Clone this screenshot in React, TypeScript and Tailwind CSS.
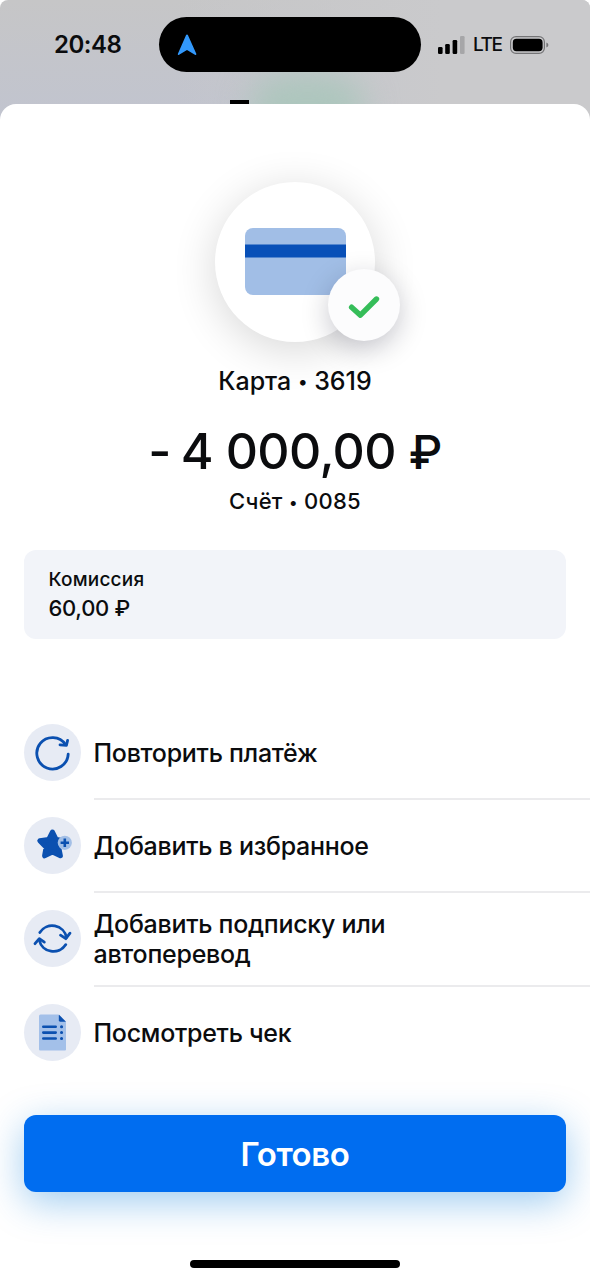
import type { ReactNode } from "react";

interface Action {
  label: string;
  icon: ReactNode;
}

function RepeatIcon() {
  return (
    <svg viewBox="0 0 57 57" className="h-full w-full" fill="none" stroke="#0b50b0" strokeWidth="2.8" strokeLinecap="round" strokeLinejoin="round">
      <path d="M44.2 30.2A15.7 15.7 0 1 1 41.6 20.6" />
      <path d="M36 20.8L42.4 21.4L43.6 16.4" />
    </svg>
  );
}

function FavoriteIcon() {
  return (
    <svg viewBox="0 0 57 57" className="h-full w-full">
      <path
        d="M28.5 15L32.2 22.6L40.8 23.8L34.7 30.2L36.4 38.8L28.5 34.9L20.6 38.8L22.1 30.2L15.8 23.8L24.6 22.6Z"
        fill="#0b50b0"
        stroke="#0b50b0"
        strokeWidth="5"
        strokeLinejoin="round"
      />
      <circle cx="40.8" cy="25.8" r="7.1" fill="#a3bfe6" />
      <path d="M36.6 25.8H45M40.8 21.6V30" stroke="#0b50b0" strokeWidth="2.6" />
    </svg>
  );
}

function SubscriptionIcon() {
  return (
    <svg viewBox="0 0 57 57" className="h-full w-full" fill="none" stroke="#0b50b0" strokeWidth="2.8" strokeLinecap="round" strokeLinejoin="round">
      <path d="M15.8 22.6A14.6 14.6 0 0 1 42.5 27.5" />
      <path d="M36.5 25.2L41.8 28.7L46 23.2" />
      <path d="M41.8 34.6A14.6 14.6 0 0 1 15.2 30" />
      <path d="M11 33.7L15.3 28.6L20.3 32.1" />
    </svg>
  );
}

function ReceiptIcon() {
  return (
    <svg viewBox="0 0 57 57" className="h-full w-full">
      <path d="M16.5 10.5H34L42 18V45.5Q42 46.5 41 46.5H16.2Q15 46.5 15 45.3V12Q15 10.5 16.5 10.5Z" fill="#a3c0e9" />
      <path d="M34.8 10.5L42 17.7H36.2Q34.8 17.7 34.8 16.3Z" fill="#0b50b0" />
      <path d="M19.3 22.8H31.7M19.3 28.6H31.7M19.3 34.5H31.7" stroke="#0b50b0" strokeWidth="2.6" strokeLinecap="round" />
      <path d="M37.5 22.8H37.6M37.5 28.6H37.6M37.5 34.5H37.6" stroke="#0b50b0" strokeWidth="3" strokeLinecap="round" />
    </svg>
  );
}

const actions: Action[] = [
  { label: "Повторить платёж", icon: <RepeatIcon /> },
  { label: "Добавить в избранное", icon: <FavoriteIcon /> },
  { label: "Добавить подписку или автоперевод", icon: <SubscriptionIcon /> },
  { label: "Посмотреть чек", icon: <ReceiptIcon /> },
];

function StatusBar() {
  return (
    <div className="relative flex h-[120px] w-full items-start overflow-hidden rounded-t-lg bg-linear-to-b from-[#c6c6c7] to-[#c1c4cf]">
      <div className="absolute inset-0 bg-linear-to-r from-transparent from-30% to-[#cacacc] to-75%" />
      <div className="absolute top-[74px] left-[250px] h-[70px] w-[115px] rounded-full bg-[#adc6bd] blur-lg" />
      <div className="absolute top-[100px] left-[230px] h-[6px] w-[19px] bg-black" />
      <div className="relative flex w-full items-center pt-[17px]">
        <span className="ml-[54px] w-[105px] text-[24px] leading-[55px] font-semibold tracking-[-0.5px]">20:48</span>
        <div className="flex h-[55px] w-[262px] items-center rounded-full bg-black pl-[18px]">
          <svg viewBox="0 0 20 22" className="h-[22px] w-5">
            <path d="M10 .4Q10.7.4 11 1.2L19.3 19.8Q19.5 21.5 17.9 20.8L10 15.9L2.1 20.8Q.5 21.5.9 19.8L9 1.2Q9.3.4 10 .4Z" fill="#3298fb" />
          </svg>
        </div>
        <svg viewBox="0 0 28 18" className="ml-[17px] h-[18px] w-7">
          <rect x="0" y="11" width="4.6" height="7" rx="1.3" />
          <rect x="7.2" y="8" width="4.6" height="10" rx="1.3" />
          <rect x="14.6" y="4" width="4.6" height="14" rx="1.3" />
          <rect x="22" y="0" width="4.6" height="18" rx="1.3" fill="#a6a6a8" />
        </svg>
        <span className="ml-[7px] w-[37px] text-[19px] leading-[55px] font-medium tracking-[-1.4px]">LTE</span>
        <svg viewBox="0 0 39 18" className="h-[18px] w-[39px]">
          <rect x=".6" y=".6" width="33.8" height="16.8" rx="5.4" fill="none" stroke="#747476" strokeWidth="1.2" />
          <rect x="2.8" y="2.8" width="29.8" height="12.4" rx="3.6" />
          <path d="M36.4 6.4Q38.4 7.2 38.4 9T36.4 11.6Z" fill="#747476" />
        </svg>
      </div>
    </div>
  );
}

function PaymentBadge() {
  return (
    <div className="relative mt-[78px] h-[160px] w-[160px] rounded-full bg-white shadow-[0_8px_44px_rgba(0,0,0,0.16)]">
      <svg viewBox="0 0 101 67" className="mt-[46px] ml-[30px] h-[67px] w-[101px]">
        <rect width="101" height="67" rx="8" fill="#a1bee6" />
        <path d="M0 16.5H101V29.5H0Z" fill="#0850b8" />
      </svg>
      <div className="absolute top-[87px] left-[113px] h-[72px] w-[72px] rounded-full bg-[#fcfcfd] shadow-[0_8px_28px_rgba(0,0,30,0.22)]">
        <svg viewBox="0 0 72 72" className="h-full w-full" fill="none">
          <path d="M23.6 38.2L32.4 46.2L48.5 30" stroke="#35bd59" strokeWidth="5.4" strokeLinecap="round" strokeLinejoin="round" />
        </svg>
      </div>
    </div>
  );
}

export default function App() {
  return (
    <div className="flex h-[1280px] w-[590px] flex-col bg-white font-['Inter','Noto_Sans',sans-serif] text-[#0b0c0e]">
      <StatusBar />
      <main className="relative -mt-4 flex w-full flex-1 flex-col items-center rounded-t-[16px] bg-white">
        <PaymentBadge />
        <p className="mt-[24px] h-[30px] text-[25px] leading-[30px] font-medium tracking-[0px]">
          Карта <span className="align-[2px] text-[18px] leading-none">•</span> 3619
        </p>
        <p className="mt-[25px] h-[60px] text-[50px] leading-[60px] font-medium tracking-[-0.6px] whitespace-nowrap">
          <span className="tracking-[-2px]">- </span>4 000,00 <span className="text-[47px] leading-none">₽</span>
        </p>
        <p className="mt-[6px] h-[28px] text-[22px] leading-[28px] font-medium tracking-[0.3px]">
          Счёт <span className="align-[1px] text-[16px] leading-none">•</span> 0085
        </p>

        <section className="mt-[35px] flex h-[89px] w-[542px] flex-col rounded-xl bg-[#f2f4f9] px-[24.5px] pt-[16px]">
          <span className="text-[19px] leading-[28px] font-medium tracking-[0.2px]">Комиссия</span>
          <span className="text-[22px] leading-[28px] font-medium tracking-[-0.3px]">60,00 ₽</span>
        </section>

        <ul className="mt-[67px] flex w-full flex-col pl-6">
          {actions.map((action, i) => (
            <li key={action.label} className="flex h-[93.2px] w-full items-center gap-[12.5px]">
              <div className="h-[57px] w-[57px] flex-none rounded-full bg-[#e7ebf4]">{action.icon}</div>
              <div className={`relative top-px flex h-full flex-1 items-center border-b-2 ${i < actions.length - 1 ? "border-[#ebebed]" : "border-transparent"}`}>
                <span className="w-[340px] pt-px text-[25px] leading-[30px] font-medium tracking-[-0.28px]">{action.label}</span>
              </div>
            </li>
          ))}
        </ul>

        <button
          type="button"
          className="mt-[36px] h-[77px] w-[542px] flex-none rounded-xl bg-[#006df0] pt-[2px] text-[33px] font-semibold tracking-[-0.4px] text-white shadow-[0_10px_38px_rgba(0,120,215,0.38)]"
        >
          Готово
        </button>
        <div className="mt-[68px] h-2 w-[210px] rounded-full bg-black" />
      </main>
    </div>
  );
}
